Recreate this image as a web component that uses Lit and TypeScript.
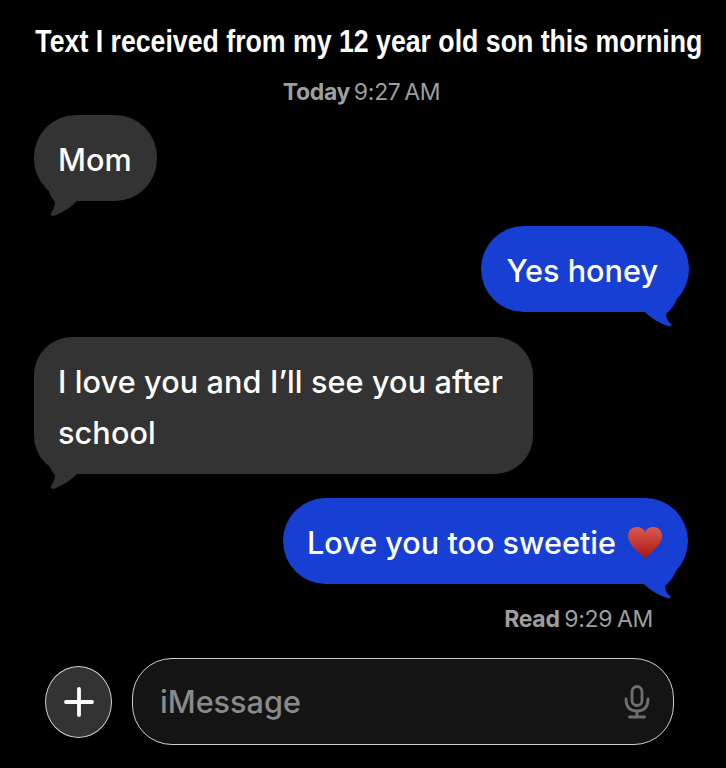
import { LitElement, html, css, svg } from "lit";
import { customElement } from "lit/decorators.js";

const leftTail = svg`<svg class="tail tail-left" width="50" height="30" viewBox="0 0 50 30"><path d="M14 0 C15 6 17 11 21 15 C21 19 19 23 17 26 C16 28 18 29.5 21 28.5 C30 25 37 20 43 14 L43 0 Z" fill="#333333"/></svg>`;
const rightTail = svg`<svg class="tail tail-right" width="50" height="30" viewBox="0 0 50 30"><path d="M40 0 C38 8 33 12 29 16 C29 20 31 24 34 26 C35.5 27.5 34 29 31 28 C22 25 14 20 8 14 L8 0 Z" fill="#183fd3"/></svg>`;

@customElement("app-root")
export class AppRoot extends LitElement {
  static styles = css`
    :host {
      display: block;
      width: 726px;
      height: 768px;
      background: #000;
      overflow: hidden;
      font-family: Inter, "Liberation Sans", sans-serif;
      color: #fff;
    }
    .page {
      display: flex;
      flex-direction: column;
      height: 768px;
      box-sizing: border-box;
      padding: 21px 37px 0 34px;
    }
    .title {
      align-self: center;
      margin-left: 15px;
      height: 40px;
      line-height: 40px;
      font-family: "Liberation Sans", Arial, sans-serif;
      font-weight: 700;
      font-size: 32px;
      white-space: nowrap;
      transform: scaleX(0.834);
    }
    .stamp {
      font-size: 23px;
      line-height: 30px;
      color: #9e9e9e;
      letter-spacing: -0.3px;
      word-spacing: -1.5px;
      white-space: nowrap;
    }
    .stamp b { font-weight: 700; }
    .today {
      align-self: center;
      margin-top: 16px;
      margin-bottom: 8px;
      word-spacing: -2.5px;
    }
    .read {
      align-self: flex-end;
      margin-top: 20px;
      margin-right: 36px;
    }
    .bubble {
      position: relative;
      box-sizing: border-box;
      font-size: 30.6px;
      font-weight: 500;
      line-height: 51px;
      padding: 19px 25px 16px 24px;
      white-space: nowrap;
    }
    .in {
      align-self: flex-start;
      background: #333;
      border-radius: 42px;
    }
    .out {
      align-self: flex-end;
      background: #183fd3;
      border-radius: 43px;
    }
    .gap25 { margin-top: 25px; }
    .gap24 { margin-top: 24px; }
    .honey { padding-right: 31px; padding-left: 25px; }
    .love { margin-right: 1px; }
    .wide { width: 499px; white-space: normal; border-radius: 38px; letter-spacing: 0.12px; }
    .tail { position: absolute; bottom: -16px; }
    .tail-left { left: 0; }
    .tail-right { right: 2px; }
    .line { display: flex; align-items: center; gap: 11px; }
    .heart { display: block; flex: none; }
    .composer {
      display: flex;
      align-items: center;
      gap: 20px;
      margin: 24px 15px 0 11px;
    }
    .plus {
      flex: none;
      width: 67px;
      height: 72px;
      box-sizing: border-box;
      border: 1.5px solid #d0d0d0;
      border-radius: 50%;
      background: #333;
      display: flex;
      align-items: center;
      justify-content: center;
    }
    .field {
      flex: 1;
      height: 87px;
      box-sizing: border-box;
      border: 1.5px solid #cfcfcf;
      border-radius: 40px;
      background: #141414;
      display: flex;
      align-items: center;
      justify-content: space-between;
      padding: 0 23px 0 27px;
    }
    .placeholder {
      font-size: 30.6px;
      font-weight: 500;
      color: #8a8a8a;
    }
  `;

  render() {
    return html`<div class="page">
      <div class="title">Text I received from my 12 year old son this morning</div>
      <div class="stamp today"><b>Today</b> 9:27 AM</div>
      <div class="bubble in">Mom${leftTail}</div>
      <div class="bubble out honey gap25">Yes honey${rightTail}</div>
      <div class="bubble in wide gap25">I love you and I’ll see you after school${leftTail}</div>
      <div class="bubble out love gap24">
        <div class="line">
          <span>Love you too sweetie</span>
          <svg class="heart" width="36" height="34" viewBox="0 0 36 34">
            <defs>
              <linearGradient id="h" x1="0" y1="0" x2="0" y2="1">
                <stop offset="0" stop-color="#d85a52" />
                <stop offset="1" stop-color="#ab1410" />
              </linearGradient>
            </defs>
            <path d="M18 33 C14 27 1 20 1 10 C1 4 5 1 10 1 C14 1 16.5 3 18 6 C19.5 3 22 1 26 1 C31 1 35 4 35 10 C35 20 22 27 18 33 Z" fill="url(#h)" />
          </svg>
        </div>
        ${rightTail}
      </div>
      <div class="stamp read"><b>Read</b> 9:29 AM</div>
      <div class="composer">
        <div class="plus">
          <svg width="30" height="30" viewBox="0 0 30 30"><path d="M15 2 V28 M2 15 H28" stroke="#fff" stroke-width="3.8" stroke-linecap="round" fill="none" /></svg>
        </div>
        <div class="field">
          <span class="placeholder">iMessage</span>
          <svg width="26" height="34" viewBox="0 0 26 34" fill="none" stroke="#6f6f6f" stroke-width="2.8" stroke-linecap="round">
            <rect x="8" y="1.5" width="10" height="19" rx="5" />
            <path d="M2 14 C2 22 6 26 13 26 C20 26 24 22 24 14 M13 26 V31 M5.5 32 H20.5" />
          </svg>
        </div>
      </div>
    </div>`;
  }
}
